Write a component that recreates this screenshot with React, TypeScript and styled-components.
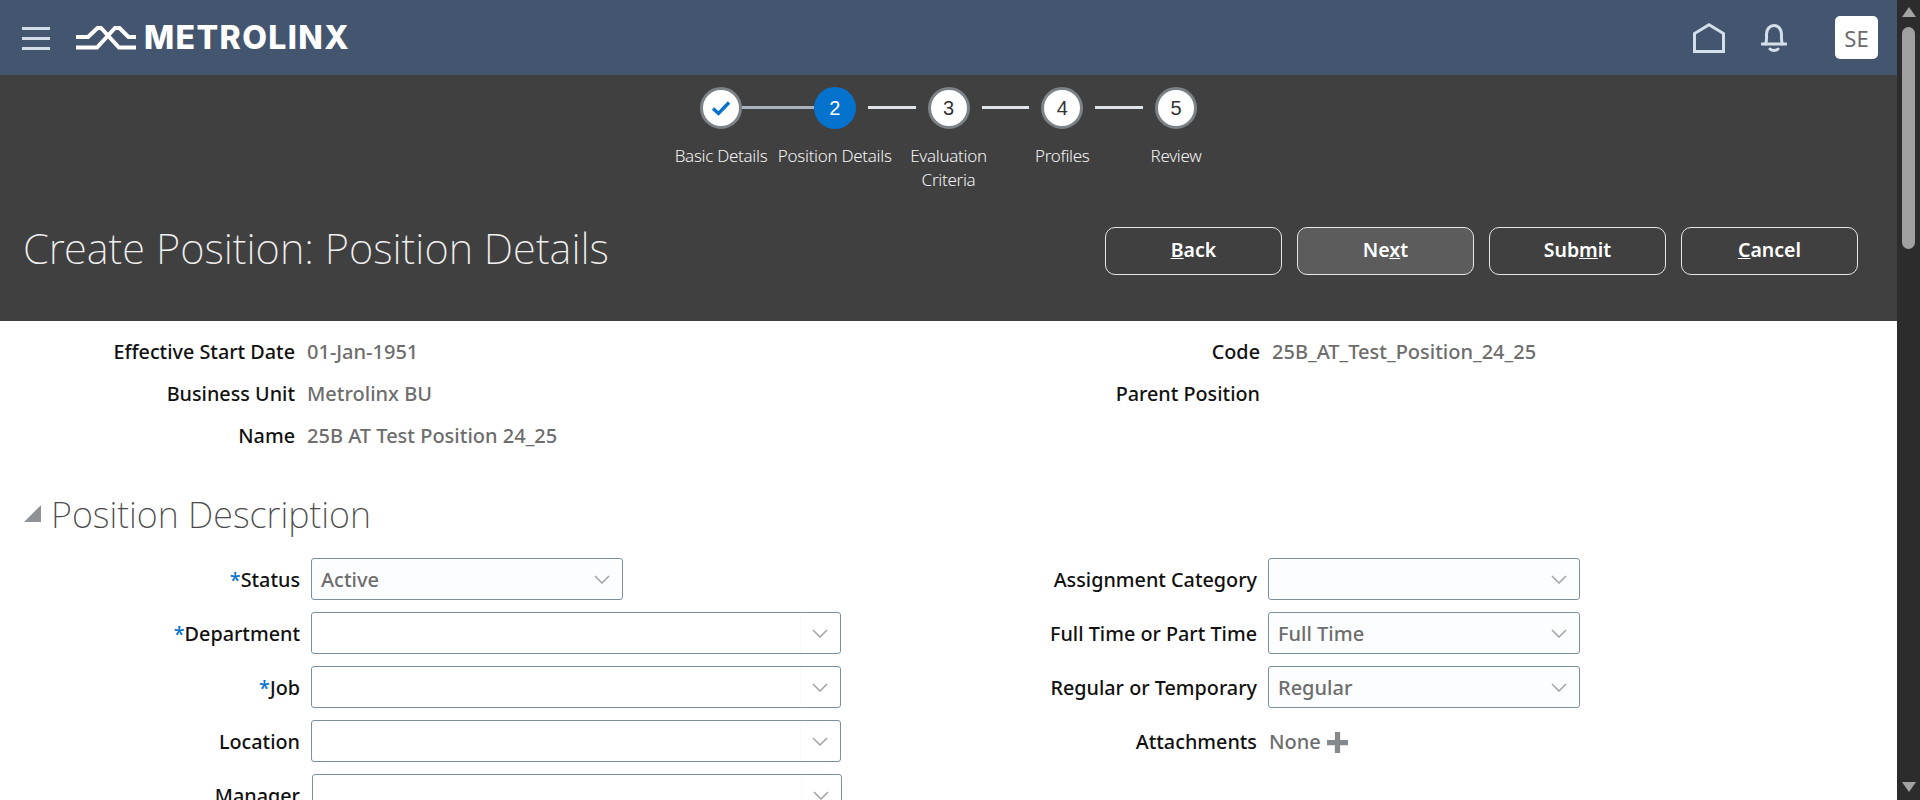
import styled, { createGlobalStyle } from "styled-components";

const FONT = `"Noto Sans", "Open Sans", "Liberation Sans", sans-serif`;

const GlobalStyle = createGlobalStyle`
  html, body {
    margin: 0;
    height: 100%;
    overflow: hidden;
    background: #fff;
    font-family: ${FONT};
  }
`;

const steps = [
  { n: "1", label: "Basic Details", state: "done" },
  { n: "2", label: "Position Details", state: "current" },
  { n: "3", label: "Evaluation Criteria", state: "todo" },
  { n: "4", label: "Profiles", state: "todo" },
  { n: "5", label: "Review", state: "todo" },
];

const buttons = [
  { before: "", key: "B", after: "ack" },
  { before: "Ne", key: "x", after: "t", active: true },
  { before: "Sub", key: "m", after: "it" },
  { before: "", key: "C", after: "ancel" },
];

function Chevron() {
  return (
    <ChevronIcon viewBox="0 0 16 9" aria-hidden="true">
      <polyline points="1,1 8,8 15,1" />
    </ChevronIcon>
  );
}

function Select({ value, width, nudge, divided }: { value?: string; width: number; nudge?: boolean; divided?: boolean }) {
  return (
    <SelectBox $width={width} $nudge={nudge} $divided={divided}>
      <SelectValue>{value}</SelectValue>
      <ChevronCell $divided={divided}>
        <Chevron />
      </ChevronCell>
    </SelectBox>
  );
}

export default function App() {
  return (
    <Page>
      <GlobalStyle />
      <Main>
        <Header>
          <Hamburger aria-label="Menu">
            <span />
            <span />
            <span />
          </Hamburger>
          <Logo>
            <LogoMark viewBox="0 0 60 24" aria-hidden="true">
              <path d="M0 11 H12 L21.500 2 H25 L43 21.500 H60" />
              <path d="M0 21.500 H21 L39 2 H43.500 L52.500 11 H60" />
            </LogoMark>
            <LogoText>METROLINX</LogoText>
          </Logo>
          <HeaderIcons>
            <HomeIcon viewBox="0 0 32 30" aria-hidden="true">
              <path d="M1.500 28.500 V10.500 L16 1.800 L30.500 10.500 V28.500 Z" />
            </HomeIcon>
            <BellIcon viewBox="0 0 26 28" aria-hidden="true">
              <path d="M1 20 H25" />
              <path d="M4.500 20 C6 17 5.500 13 5.500 10 C5.500 5 9 1.500 13 1.500 C17 1.500 20.500 5 20.500 10 C20.500 13 20 17 21.500 20" />
              <path d="M9 25 C11 27 15 27 17 25" />
            </BellIcon>
            <Avatar>SE</Avatar>
          </HeaderIcons>
        </Header>

        <Band>
          <Stepper>
            {steps.map((step, i) => (
              <Step key={step.n}>
                <StepTrack>
                  <Connector $hidden={i === 0} $side="left" $linked={i === 1} />
                  <StepCircle $current={step.state === "current"}>
                    {step.state === "done" ? (
                      <CheckIcon viewBox="0 0 20 16" aria-hidden="true">
                        <polyline points="2,8.500 7.500,13.500 18,2.500" />
                      </CheckIcon>
                    ) : (
                      step.n
                    )}
                  </StepCircle>
                  <Connector $hidden={i === steps.length - 1} $side="right" $linked={i === 0} />
                </StepTrack>
                <StepLabel>{step.label}</StepLabel>
              </Step>
            ))}
          </Stepper>
          <TitleRow>
            <PageTitle>Create Position: Position Details</PageTitle>
            <Actions>
              {buttons.map((b) => (
                <ActionButton key={b.key} $active={b.active}>
                  {b.before}
                  <u>{b.key}</u>
                  {b.after}
                </ActionButton>
              ))}
            </Actions>
          </TitleRow>
        </Band>

        <Content>
          <TwoColumns>
            <Column>
              <ReadOnlyRow>
                <FieldLabel $width={295}>Effective Start Date</FieldLabel>
                <ReadOnlyValue>01-Jan-1951</ReadOnlyValue>
              </ReadOnlyRow>
              <ReadOnlyRow>
                <FieldLabel $width={295}>Business Unit</FieldLabel>
                <ReadOnlyValue>Metrolinx BU</ReadOnlyValue>
              </ReadOnlyRow>
              <ReadOnlyRow>
                <FieldLabel $width={295}>Name</FieldLabel>
                <ReadOnlyValue>25B AT Test Position 24_25</ReadOnlyValue>
              </ReadOnlyRow>
            </Column>
            <Column>
              <ReadOnlyRow>
                <FieldLabel $width={310}>Code</FieldLabel>
                <ReadOnlyValue>25B_AT_Test_Position_24_25</ReadOnlyValue>
              </ReadOnlyRow>
              <ReadOnlyRow>
                <FieldLabel $width={310}>Parent Position</FieldLabel>
              </ReadOnlyRow>
            </Column>
          </TwoColumns>

          <SectionHeader>
            <Disclosure />
            <SectionTitle>Position Description</SectionTitle>
          </SectionHeader>

          <TwoColumns>
            <FormColumn>
              <FormRow>
                <FieldLabel $width={300}>
                  <Required>*</Required>Status
                </FieldLabel>
                <Select value="Active" width={312} />
              </FormRow>
              <FormRow>
                <FieldLabel $width={300}>
                  <Required>*</Required>Department
                </FieldLabel>
                <Select width={530} divided />
              </FormRow>
              <FormRow>
                <FieldLabel $width={300}>
                  <Required>*</Required>Job
                </FieldLabel>
                <Select width={530} divided />
              </FormRow>
              <FormRow>
                <FieldLabel $width={300}>Location</FieldLabel>
                <Select width={530} divided />
              </FormRow>
              <FormRow>
                <FieldLabel $width={300}>Manager</FieldLabel>
                <Select width={530} nudge divided />
              </FormRow>
            </FormColumn>
            <FormColumn>
              <FormRow>
                <FieldLabel $width={307}>Assignment Category</FieldLabel>
                <Select width={312} />
              </FormRow>
              <FormRow>
                <FieldLabel $width={307}>Full Time or Part Time</FieldLabel>
                <Select value="Full Time" width={312} />
              </FormRow>
              <FormRow>
                <FieldLabel $width={307}>Regular or Temporary</FieldLabel>
                <Select value="Regular" width={312} />
              </FormRow>
              <FormRow>
                <FieldLabel $width={307}>Attachments</FieldLabel>
                <AttachmentValue>
                  None
                  <PlusIcon viewBox="0 0 20 20" aria-hidden="true">
                    <path d="M7.500 0 H12.500 V7.500 H20 V12.500 H12.500 V20 H7.500 V12.500 H0 V7.500 H7.500 Z" />
                  </PlusIcon>
                </AttachmentValue>
              </FormRow>
            </FormColumn>
          </TwoColumns>
        </Content>
      </Main>

      <ScrollBar>
        <ScrollArrow $dir="up" />
        <ScrollThumb />
        <ScrollArrow $dir="down" />
      </ScrollBar>
    </Page>
  );
}

const Page = styled.div`
  display: flex;
  width: 1920px;
  height: 800px;
  overflow: hidden;
`;

const Main = styled.div`
  width: 1897px;
  flex: none;
  overflow: hidden;
`;

const Header = styled.header`
  height: 75px;
  background: #44566f;
  display: flex;
  align-items: center;
  padding: 0 19px 0 22px;
  box-sizing: border-box;
`;

const Hamburger = styled.div`
  width: 28px;
  display: flex;
  flex-direction: column;
  gap: 7px;
  margin-top: 1px;

  span {
    display: block;
    height: 3px;
    background: #d3deea;
  }
`;

const Logo = styled.div`
  display: flex;
  align-items: center;
  margin-left: 26px;
  gap: 8px;
`;

const LogoMark = styled.svg`
  width: 60px;
  height: 24px;
  display: block;
  overflow: visible;

  path {
    fill: none;
    stroke: #fff;
    stroke-width: 4;
  }
`;

const LogoText = styled.span`
  font-family: Inter, ${FONT};
  font-weight: 800;
  font-size: 32px;
  line-height: 32px;
  color: #fff;
  letter-spacing: 1.4px;
`;

const HeaderIcons = styled.div`
  margin-left: auto;
  display: flex;
  align-items: center;
`;

const HomeIcon = styled.svg`
  width: 32px;
  height: 30px;
  margin-top: 1px;

  path {
    fill: none;
    stroke: #d5dfeb;
    stroke-width: 3;
  }
`;

const BellIcon = styled.svg`
  width: 26px;
  height: 28px;
  margin-left: 36px;

  path {
    fill: none;
    stroke: #d5dfeb;
    stroke-width: 3;
    stroke-linecap: round;
  }
`;

const Avatar = styled.div`
  width: 43px;
  height: 43px;
  margin-left: 48px;
  border-radius: 5px;
  background: #fff;
  color: #6b6b6b;
  font-size: 22px;
  display: flex;
  align-items: center;
  justify-content: center;
`;

const Band = styled.section`
  height: 246px;
  background: #404040;
  box-sizing: border-box;
  padding-top: 12px;
`;

const Stepper = styled.div`
  display: flex;
  justify-content: center;
`;

const Step = styled.div`
  width: 113.75px;
  display: flex;
  flex-direction: column;
  align-items: center;
`;

const StepTrack = styled.div`
  width: 100%;
  height: 42px;
  display: flex;
  align-items: center;
`;

const Connector = styled.div<{ $hidden?: boolean; $side: "left" | "right"; $linked?: boolean }>`
  flex: none;
  width: ${(p) => (p.$linked ? "35.875px" : "23.875px")};
  height: 3px;
  margin-top: -1px;
  visibility: ${(p) => (p.$hidden ? "hidden" : "visible")};
  background: ${(p) => (p.$linked ? "#a9b3bd" : "#e1e4e8")};
  ${(p) => (p.$linked ? "" : p.$side === "left" ? "margin-right: 12px;" : "margin-left: 12px;")}
`;

const StepCircle = styled.div<{ $current?: boolean }>`
  width: 42px;
  height: 42px;
  flex: none;
  box-sizing: border-box;
  border-radius: 50%;
  border: ${(p) => (p.$current ? "none" : "3px solid #7d8287")};
  background: ${(p) => (p.$current ? "#0572ce" : "#fff")};
  color: ${(p) => (p.$current ? "#fff" : "#333")};
  font-family: "Liberation Sans", sans-serif;
  font-size: 20px;
  display: flex;
  align-items: center;
  justify-content: center;
`;

const CheckIcon = styled.svg`
  width: 20px;
  height: 16px;

  polyline {
    fill: none;
    stroke: #0572ce;
    stroke-width: 3.4;
  }
`;

const StepLabel = styled.div`
  width: 120px;
  flex: none;
  margin-top: 15px;
  color: #f2f2f2;
  font-size: 17px;
  font-weight: 300;
  line-height: 24px;
  text-align: center;
  letter-spacing: -0.3px;
`;

const TitleRow = styled.div`
  margin-top: 35px;
  display: flex;
  align-items: center;
  justify-content: space-between;
  padding: 0 39px 0 23px;
`;

const PageTitle = styled.h1`
  margin: -7px 0 0;
  color: #f0f0f0;
  font-size: 41.800px;
  font-weight: 200;
  line-height: 48px;
`;

const Actions = styled.div`
  display: flex;
  gap: 15px;
`;

const ActionButton = styled.button<{ $active?: boolean }>`
  width: 177px;
  height: 48px;
  padding: 0 0 4px;
  border: 1px solid #e6e6e6;
  border-radius: 10px;
  background: ${(p) => (p.$active ? "#5c5c5c" : "transparent")};
  color: #fff;
  font-family: ${FONT};
  font-size: 19.500px;
  font-weight: 600;
`;

const Content = styled.main`
  padding-top: 9px;
`;

const TwoColumns = styled.div`
  display: grid;
  grid-template-columns: 950px 1fr;
`;

const Column = styled.div`
  display: flex;
  flex-direction: column;
`;

const FormColumn = styled.div`
  display: flex;
  flex-direction: column;
  gap: 12px;
`;

const ReadOnlyRow = styled.div`
  height: 42px;
  display: flex;
  align-items: center;
  gap: 12px;
`;

const FormRow = styled.div`
  height: 42px;
  display: flex;
  align-items: center;
  gap: 11px;
`;

const FieldLabel = styled.div<{ $width: number }>`
  width: ${(p) => p.$width}px;
  flex: none;
  text-align: right;
  color: #111;
  font-size: 19.800px;
  font-weight: 500;
  white-space: nowrap;
`;

const ReadOnlyValue = styled.div`
  color: #6d6d6d;
  font-size: 20px;
  font-weight: 500;
`;

const Required = styled.span`
  color: #0572ce;
`;

const SectionHeader = styled.div`
  height: 60px;
  margin-top: 30px;
  margin-bottom: 12px;
  padding-left: 24px;
  display: flex;
  align-items: center;
  gap: 10px;
`;

const Disclosure = styled.div`
  width: 0;
  height: 0;
  border-style: solid;
  border-width: 0 0 17px 17px;
  border-color: transparent transparent #8f9396 transparent;
  margin-top: -6px;
`;

const SectionTitle = styled.h2`
  margin: -2px 0 0;
  color: #4a4a4a;
  font-size: 36px;
  font-weight: 200;
  line-height: 48px;
`;

const SelectBox = styled.div<{ $width: number; $nudge?: boolean; $divided?: boolean }>`
  width: ${(p) => p.$width}px;
  height: 42px;
  flex: none;
  box-sizing: border-box;
  margin-left: ${(p) => (p.$nudge ? "1px" : "0")};
  border: 1px solid #7a909e;
  border-radius: 3px;
  background: ${(p) => (p.$divided ? "#fff" : "#fcfdfe")};
  display: flex;
  align-items: center;
`;

const SelectValue = styled.div`
  flex: 1;
  padding-left: 9px;
  color: #6d6d6d;
  font-size: 20px;
  font-weight: 500;
`;

const ChevronCell = styled.div<{ $divided?: boolean }>`
  width: 40px;
  align-self: stretch;
  display: flex;
  align-items: center;
  justify-content: flex-end;
  padding-right: 12px;
  box-sizing: border-box;
  ${(p) => (p.$divided ? "border-left: 1px solid #fafbfb;" : "")}
`;

const ChevronIcon = styled.svg`
  width: 16px;
  height: 9px;

  polyline {
    fill: none;
    stroke: #a4a6a8;
    stroke-width: 1.6;
  }
`;

const AttachmentValue = styled.div`
  display: flex;
  align-items: center;
  gap: 6px;
  padding-left: 1px;
  color: #6d6d6d;
  font-size: 20px;
  font-weight: 500;
`;

const PlusIcon = styled.svg`
  width: 21px;
  height: 21px;
  margin-top: 2px;

  path {
    fill: #84898d;
  }
`;

const ScrollBar = styled.aside`
  width: 23px;
  flex: none;
  background: #2c2c2c;
  box-sizing: border-box;
  padding: 7px 0 8px 0;
  display: flex;
  flex-direction: column;
  align-items: center;
  gap: 10px;
`;

const ScrollArrow = styled.div<{ $dir: "up" | "down" }>`
  width: 0;
  height: 0;
  border-style: solid;
  border-color: transparent;
  border-width: ${(p) => (p.$dir === "up" ? "0 7.5px 10px 7.5px" : "10px 7.5px 0 7.5px")};
  border-bottom-color: ${(p) => (p.$dir === "up" ? "#a3a3a3" : "transparent")};
  border-top-color: ${(p) => (p.$dir === "down" ? "#a3a3a3" : "transparent")};
  ${(p) => (p.$dir === "down" ? "margin-top: auto;" : "")}
`;

const ScrollThumb = styled.div`
  width: 13px;
  height: 222px;
  border-radius: 7px;
  background: #a0a0a0;
`;
